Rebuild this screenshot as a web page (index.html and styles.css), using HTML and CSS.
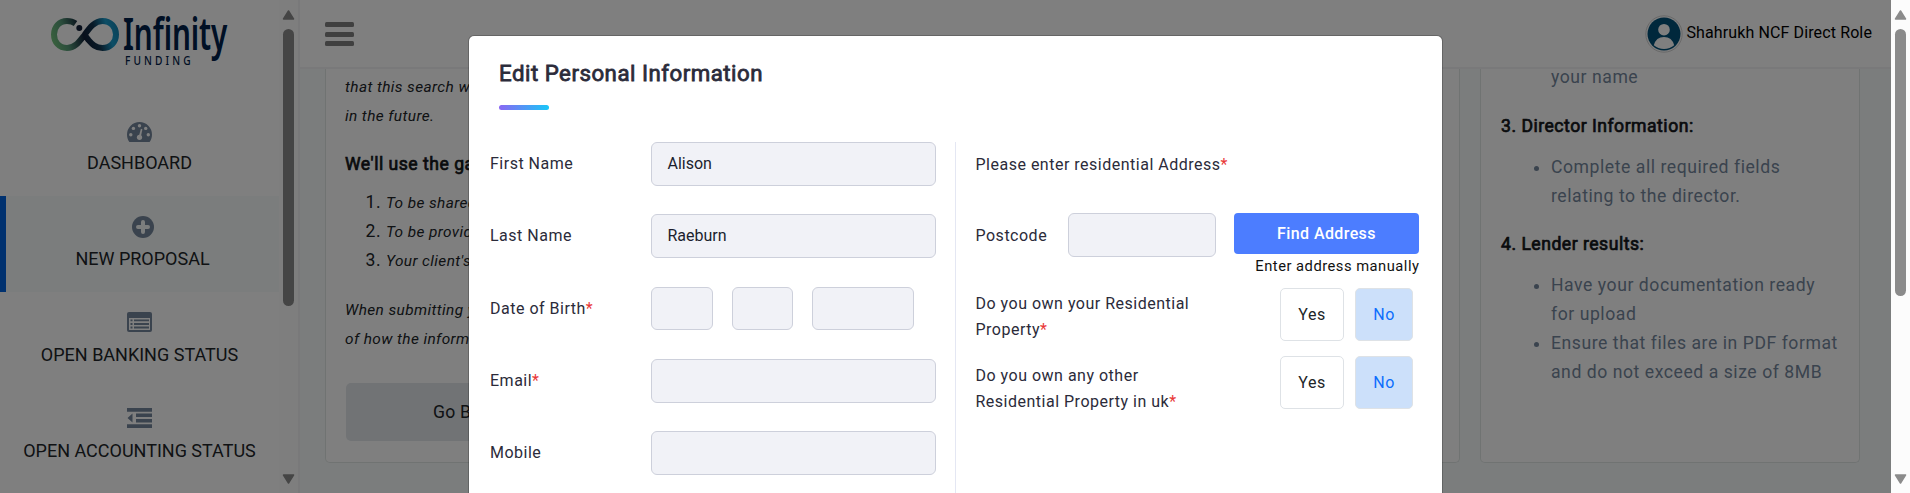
FILE: index.html
```html
<!DOCTYPE html>
<html lang="en">
<head>
<meta charset="utf-8">
<title>Infinity Funding</title>
<link rel="stylesheet" href="styles.css">
</head>
<body>
<div class="window">
  <div class="viewport">
    <div class="app">
      <aside class="sidebar">
        <div class="nav">
          <svg class="logo" width="190" height="56" viewBox="46 12 190 56">
            <defs>
              <linearGradient id="loop" gradientUnits="userSpaceOnUse" x1="52" y1="44" x2="117" y2="24">
                <stop offset="0" stop-color="#74c47c"/>
                <stop offset=".22" stop-color="#569a78"/>
                <stop offset=".48" stop-color="#101f38"/>
                <stop offset=".66" stop-color="#12344f"/>
                <stop offset=".85" stop-color="#1a9ccc"/>
                <stop offset="1" stop-color="#1486b4"/>
              </linearGradient>
            </defs>
            <path d="M75.500 23.500C72 21 69 21 67 21C59 21 54 27 54 34.500C54 42 59 48 67 48C75 48 79 42 84.500 35C90 27 95 21 102.500 21C110.500 21 116 27 116 34.500C116 42 110.500 48 102.500 48C95 48 91.500 43.500 88 39.500L84 34" fill="none" stroke="url(#loop)" stroke-width="6"/>
            <circle cx="79.300" cy="28" r="3" fill="#101f38"/>
            <text class="logo-name" transform="translate(123 50) scale(.66 1)" x="0" y="0" textLength="158" lengthAdjust="spacing">Infinity</text>
            <text class="logo-sub" transform="translate(125 64.500) scale(.78 1)" x="0" y="0" textLength="84" lengthAdjust="spacing">FUNDING</text>
          </svg>
          <a class="nav-item first">
            <svg width="25" height="20" viewBox="0 0 25 20"><path fill="currentColor" d="M12.500 0A12.500 12.500 0 0 0 0 12.500C0 15.200.7 17.500 2 19.400Q2.400 20 3 20H22Q22.600 20 23 19.400C24.300 17.500 25 15.200 25 12.500A12.500 12.500 0 0 0 12.500 0Z"/><g fill="#fff"><circle cx="3.800" cy="12.700" r="1.700"/><circle cx="6.400" cy="6.400" r="1.700"/><circle cx="12.500" cy="3.700" r="1.700"/><circle cx="18.700" cy="6.400" r="1.700"/><circle cx="21.300" cy="12.700" r="1.700"/><circle cx="12.500" cy="15.300" r="2.600"/><path d="M13.900 6.800L15.400 7.200L13.800 15L11.800 14.500Z"/></g></svg>
            <span>DASHBOARD</span>
          </a>
          <a class="nav-item active">
            <svg width="22" height="22" viewBox="0 0 22 22"><circle cx="11" cy="11" r="11" fill="currentColor"/><path d="M11 6V16M6 11H16" stroke="#f7fbfa" stroke-width="4" stroke-linecap="round"/></svg>
            <span>NEW PROPOSAL</span>
          </a>
          <a class="nav-item">
            <svg width="25" height="20" viewBox="0 0 25 20"><rect width="25" height="20" rx="2" fill="currentColor"/><path fill="#fff" d="M2 6H23V17.500Q23 18 22.500 18H2.500Q2 18 2 17.500Z"/><path d="M3.500 8.300H5.500M7 8.300H22M3.500 12H5.500M7 12H22M3.500 15.500H5.500M7 15.500H22" stroke="currentColor" stroke-width="1.800"/></svg>
            <span>OPEN BANKING STATUS</span>
          </a>
          <a class="nav-item">
            <svg width="25" height="20" viewBox="0 0 25 20"><path fill="currentColor" d="M0 0H25V3.700H0ZM9 5.500H25V9H9ZM9 11H25V14.500H9ZM0 16.200H25V20H0ZM.5 10L5.500 5.500V14.500Z"/></svg>
            <span>OPEN ACCOUNTING STATUS</span>
          </a>
        </div>
        <div class="scrollbar side">
          <svg width="13" height="10" viewBox="0 0 13 10"><path d="M6.500 1L11.500 9H1.500Z" fill="#8b8b8b" stroke="#8b8b8b" stroke-width="1.500" stroke-linejoin="round"/></svg>
          <div class="thumb side-thumb"></div>
          <svg class="down" width="13" height="10" viewBox="0 0 13 10"><path d="M6.500 9L11.500 1H1.500Z" fill="#8b8b8b" stroke="#8b8b8b" stroke-width="1.500" stroke-linejoin="round"/></svg>
        </div>
      </aside>
      <main class="main">
        <header class="topbar">
          <div class="burger"><i></i><i></i><i></i></div>
          <div class="user">
            <svg width="38" height="38" viewBox="0 0 38 38"><circle cx="19" cy="19" r="18.200" fill="#fff" stroke="#d2d2d2"/><circle cx="19" cy="19" r="16.500" fill="#005078"/><circle cx="19" cy="14.700" r="5.800" fill="#fff"/><path fill="#fff" d="M8.800 30.300Q11 22 19 22T29.200 30.300Q25 34 19 34T8.800 30.300Z"/></svg>
            <span>Shahrukh NCF Direct Role</span>
          </div>
        </header>
        <div class="content">
          <section class="card terms">
            <p class="note">that this search will<br>in the future.</p>
            <h4 class="sub">We'll use the gathered</h4>
            <ol class="uses">
              <li><em>To be shared</em></li>
              <li><em>To be provided</em></li>
              <li><em>Your client's</em></li>
            </ol>
            <p class="note">When submitting your<br>of how the information</p>
            <div class="back">Go Back</div>
          </section>
          <section class="card guide">
            <ul><li class="plain">your name</li></ul>
            <h4 class="sub">3. Director Information:</h4>
            <ul><li>Complete all required fields relating to the director.</li></ul>
            <h4 class="sub">4. Lender results:</h4>
            <ul><li>Have your documentation ready<br>for upload</li><li>Ensure that files are in PDF format and do not exceed a size of 8MB</li></ul>
          </section>
        </div>
      </main>
    </div>
    <div class="backdrop">
      <div class="modal">
        <h2 class="title">Edit Personal Information</h2>
        <div class="accent"></div>
        <div class="columns">
          <div class="left">
            <div class="row"><label>First Name</label><div class="field">Alison</div></div>
            <div class="row"><label>Last Name</label><div class="field">Raeburn</div></div>
            <div class="row"><label>Date of Birth<b>*</b></label><div class="dob"><div class="field"></div><div class="field"></div><div class="field"></div></div></div>
            <div class="row"><label>Email<b>*</b></label><div class="field"></div></div>
            <div class="row"><label>Mobile</label><div class="field"></div></div>
          </div>
          <div class="right">
            <div class="heading">Please enter residential Address<b>*</b></div>
            <div class="postcode">
              <label>Postcode</label>
              <div class="field"></div>
              <div class="find"><div class="btn">Find Address</div><a>Enter address manually</a></div>
            </div>
            <div class="question"><p>Do you own your Residential Property<b>*</b></p><div class="opt yes">Yes</div><div class="opt no">No</div></div>
            <div class="question second"><p>Do you own any other Residential Property in uk<b>*</b></p><div class="opt yes">Yes</div><div class="opt no">No</div></div>
          </div>
        </div>
      </div>
    </div>
  </div>
  <div class="scrollbar page">
    <svg width="13" height="10" viewBox="0 0 13 10"><path d="M6.500 1L11.500 9H1.500Z" fill="#8b8b8b" stroke="#8b8b8b" stroke-width="1.500" stroke-linejoin="round"/></svg>
    <div class="thumb page-thumb"></div>
    <svg class="down" width="13" height="10" viewBox="0 0 13 10"><path d="M6.500 9L11.500 1H1.500Z" fill="#8b8b8b" stroke="#8b8b8b" stroke-width="1.500" stroke-linejoin="round"/></svg>
  </div>
</div>
</body>
</html>
```
FILE: styles.css
```css
* { box-sizing: border-box; }
body { margin: 0; font-family: Roboto, "Liberation Sans", sans-serif; font-size: 16px; color: #212529; overflow: hidden; }
h2, h4, p, ul, ol { margin: 0; padding: 0; font-weight: 400; }
.window { display: flex; height: 493px; overflow: hidden; }
.viewport { position: relative; width: 1891px; height: 493px; overflow: hidden; }
.app { display: flex; height: 493px; }

/* sidebar */
.sidebar { display: flex; width: 300px; border-right: 2px solid #f3f3f5; background: #fff; }
.nav { width: 279px; }
.logo { display: block; margin: 12px 0 32px 46px; overflow: visible; }
.logo-name { font: 600 45px "Noto Sans", sans-serif; fill: #00204a; }
.logo-sub { font: 500 13px "Noto Sans", sans-serif; fill: #00204a; }
.nav-item { display: flex; flex-direction: column; align-items: center; height: 96px; padding-top: 20px; font-size: 18px; line-height: 24px; color: #75879c; }
.nav-item svg { display: block; height: 20px; overflow: visible; }
.nav-item span { margin-top: 11px; color: #212529; }
.nav-item.first { padding-top: 22px; }
.nav-item.first span { margin-top: 9px; }
.nav-item.active { border-left: 6px solid #0062df; background: #f7fbfa; }
.nav-item.active svg { height: 22px; }
.nav-item.active span { margin-top: 9px; }

/* scrollbars */
.scrollbar { display: flex; flex-direction: column; align-items: center; width: 19px; height: 493px; padding-top: 10px; background: #fcfcfc; }
.side { background: #fdfdfd; }
.thumb { width: 11px; margin-top: 9px; border-radius: 6px; background: #8b8b8b; }
.side-thumb { height: 277px; }
.page-thumb { height: 267px; }
.down { margin: auto 0 9px; }

/* main area */
.main { flex: 1; height: 493px; overflow: hidden; background: #f7fbfa; }
.topbar { display: flex; justify-content: space-between; height: 69px; padding: 0 19px 0 25px; border-bottom: 2px solid #f3f3f5; background: #fff; }
.burger { display: flex; flex-direction: column; gap: 4.500px; padding-top: 22px; }
.burger i { width: 29px; height: 5px; border-radius: 1.500px; background: #818181; }
.user { display: flex; gap: 3px; padding-top: 15px; font-size: 16px; letter-spacing: .12px; color: #000; }
.user span { padding-top: 8px; line-height: 20px; }
.content { display: flex; gap: 20px; height: 394px; padding-left: 25px; }
.card { height: 394px; overflow: hidden; border: 1px solid #e0e6e5; border-top: 0; border-radius: 0 0 5px 5px; background: #fff; }
.terms { width: 1135px; padding: 4px 19px 0 20px; }
.note { margin-left: -1px; font-size: 15.400px; font-style: italic; letter-spacing: .4px; line-height: 29px; }
.sub { font-size: 17.600px; letter-spacing: .5px; line-height: 30px; color: #14171b; -webkit-text-stroke: .7px #14171b; }
.terms .sub { margin: 18px 0 0 -1px; }
.uses { margin: 9px 0 22px; padding-left: 40px; font-size: 17.600px; letter-spacing: .5px; line-height: 29px; }
.uses li { height: 28.800px; }
.uses em { font-size: 15.400px; letter-spacing: .4px; line-height: 1; }
.back { width: 500px; height: 58px; margin-top: 29px; padding-left: 87px; border-radius: 5px; background: #e2e6ea; font-size: 17.600px; letter-spacing: .2px; line-height: 58px; }
.guide { width: 380px; padding: 0 12px 0 20px; }
.guide ul { padding-left: 50px; font-size: 17.600px; letter-spacing: .55px; line-height: 28.800px; color: #75879c; }
.guide li.plain { list-style: none; margin-top: -6px; }
.guide .sub { margin: 20px 0 12px; line-height: 29px; }

/* modal */
.backdrop { position: absolute; inset: 0; display: flex; justify-content: center; padding-top: 35px; background: rgba(0, 0, 0, .5); }
.modal { width: 975px; height: 600px; margin-left: 20px; padding: 23px 22px 0 21px; border: 1px solid rgba(0, 0, 0, .2); border-radius: 6px; background: #fff; background-clip: padding-box; color: #2b2b3a; flex: none; }
.title { margin-left: 9px; font-size: 22.250px; letter-spacing: .5px; line-height: 28px; -webkit-text-stroke: .8px #2b2b3a; }
.accent { width: 50px; height: 5px; margin: 18px 0 32px 9px; border-radius: 3px; background: linear-gradient(90deg, #8a67f3, #18c7f8); }
.columns { display: flex; letter-spacing: .5px; }
.columns b { font-weight: 400; color: #e93838; }
.left { width: 466px; height: 460px; border-right: 1px solid #e4e7f3; }
.row { display: flex; height: 72.250px; }
.row label { width: 161px; padding-top: 11px; line-height: 22px; }
.field { width: 285px; height: 44px; padding: 0 15.500px; border: 1px solid #cdd0db; border-radius: 6px; background: #f1f2f7; color: #1b1e2e; line-height: 42px; letter-spacing: 0; }
.dob { display: flex; gap: 19px; }
.dob .field { width: 61.500px; height: 43px; padding: 0; }
.dob .field:last-child { width: 102px; }
.right { width: 464px; padding-left: 19.500px; }
.heading { height: 71px; padding-top: 12px; line-height: 22px; }
.postcode { display: flex; height: 75px; }
.postcode label { width: 92.500px; padding-top: 12px; line-height: 22px; }
.postcode .field { width: 148px; margin-right: 18px; }
.find { width: 185px; text-align: right; }
.btn { height: 41px; border-radius: 4px; background: #4c7dff; color: #fff; font-weight: 500; line-height: 41px; letter-spacing: .4px; text-align: center; }
.find a { display: block; margin-right: -.5px; color: #111; font-size: 14.720px; line-height: 24px; white-space: nowrap; }
.question { display: flex; height: 68px; }
.question p { width: 240px; margin: 3px 64.500px 0 0; line-height: 26px; }
.question.second p { margin-top: 7px; }
.opt { height: 53px; border: 1px solid #dee2e6; border-radius: 5px; color: #212529; line-height: 51px; text-align: center; }
.yes { width: 64px; margin-right: 11px; }
.no { width: 58px; background: #cce0fa; color: #0d6efd; }
```
